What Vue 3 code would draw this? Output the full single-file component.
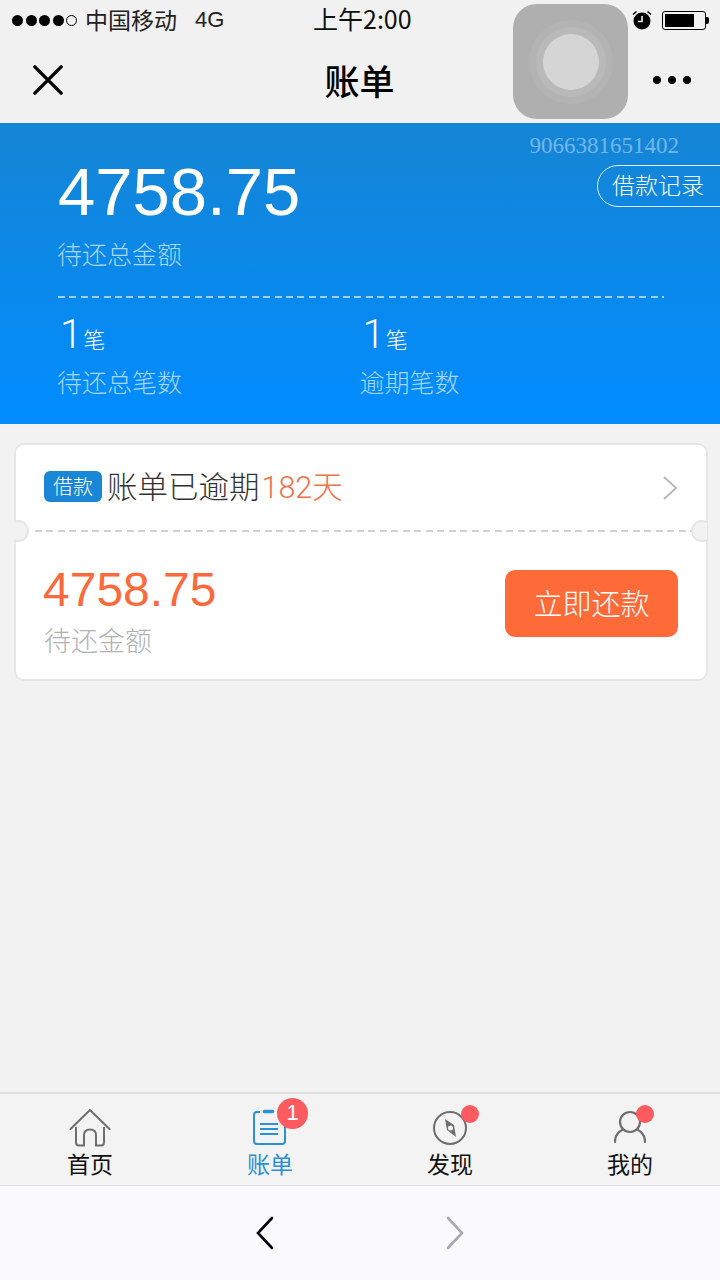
<script setup>
const tabs = [
  { key: 'home', label: '首页' },
  { key: 'bill', label: '账单', active: true, count: 1 },
  { key: 'find', label: '发现', dot: true },
  { key: 'me', label: '我的', dot: true }
]
</script>

<template>
  <div class="screen">
    <header class="top">
      <div class="status">
        <div class="status-left">
          <span class="signal"><i></i><i></i><i></i><i></i><i class="empty"></i></span>
          <span class="carrier">中国移动</span>
          <span class="net">4G</span>
        </div>
        <div class="clock">上午2:00</div>
        <div class="status-right">
          <svg class="alarm" width="22" height="22" viewBox="0 0 22 22">
            <circle cx="11" cy="12" r="8.500" fill="#000" />
            <path d="M11 7v5.500H7" fill="none" stroke="#f1f1f1" stroke-width="1.600" />
            <path d="M2 5.500 5.500 2.500M20 5.500 16.500 2.500" stroke="#000" stroke-width="1.600" />
          </svg>
          <span class="battery"><span class="level"></span></span>
          <span class="battery-cap"></span>
        </div>
      </div>
      <nav class="nav">
        <svg class="nav-close" width="32" height="32" viewBox="0 0 32 32">
          <path d="M2 2 30 30M30 2 2 30" stroke="#000" stroke-width="3.600" stroke-linecap="round" />
        </svg>
        <h1 class="nav-title">账单</h1>
        <div class="nav-more"><i></i><i></i><i></i></div>
      </nav>
    </header>

    <section class="hero">
      <div class="serial">9066381651402</div>
      <a class="record">借款记录</a>
      <div class="total">4758.75</div>
      <div class="hero-label total-label">待还总金额</div>
      <div class="hero-rule"></div>
      <div class="hero-stats">
        <div class="stat">
          <div class="stat-value">1<small>笔</small></div>
          <div class="hero-label">待还总笔数</div>
        </div>
        <div class="stat">
          <div class="stat-value">1<small>笔</small></div>
          <div class="hero-label">逾期笔数</div>
        </div>
      </div>
    </section>

    <main class="main">
      <article class="card">
        <div class="card-head">
          <span class="tag">借款</span>
          <span class="head-text">账单已逾期</span><span class="head-days">182天</span>
          <svg class="head-arrow" width="16" height="26" viewBox="0 0 16 26">
            <path d="M2 2 14 13 2 24" fill="none" stroke="#bbb" stroke-width="2" />
          </svg>
        </div>
        <div class="card-split"><span class="notch left"></span><span class="notch right"></span></div>
        <div class="card-body">
          <div>
            <div class="due">4758.75</div>
            <div class="due-label">待还金额</div>
          </div>
          <button class="pay">立即还款</button>
        </div>
      </article>
    </main>

    <footer class="tabbar">
      <div v-for="tab in tabs" :key="tab.key" class="tab" :class="[tab.key, { active: tab.active }]">
        <div class="tab-icon">
          <svg v-if="tab.key === 'home'" width="42" height="38" viewBox="0 0 42 38" fill="none" stroke="#6e6e6e" stroke-width="2">
            <path d="M1.500 20 21 1 40.500 20" stroke-linecap="round" />
            <path d="M7 18V33.500Q7 36.500 10 36.500H15V26Q15 20.500 21 20.500T27 26V36.500H32Q35 36.500 35 33.500V18" />
          </svg>
          <svg v-else-if="tab.key === 'bill'" width="36" height="38" viewBox="0 0 36 38" fill="none" stroke="#2a90d8" stroke-width="2">
            <path d="M8 3H5Q2 3 2 6V32Q2 35 5 35H30Q33 35 33 32V6Q33 3 30 3H25" />
            <path d="M12.500 2.500H20.500" stroke-width="3.500" stroke-linecap="round" />
            <path d="M8 15H26M8 20H26M8 25H26" />
          </svg>
          <svg v-else-if="tab.key === 'find'" width="36" height="36" viewBox="0 0 36 36" fill="none">
            <circle cx="18" cy="18" r="16" stroke="#6e6e6e" stroke-width="2" />
            <path d="M13 9 22 15 24 27 15 20Z" fill="#6e6e6e" />
            <circle cx="18.500" cy="18" r="2.500" fill="#f2f2f2" />
          </svg>
          <svg v-else width="34" height="36" viewBox="0 0 34 36" fill="none" stroke="#6e6e6e" stroke-width="2.200">
            <path d="M2 32C2 23 9 18 17 18S32 23 32 32" stroke-linecap="round" />
            <circle cx="17" cy="12" r="10" fill="#f3f3f3" />
          </svg>
          <span v-if="tab.count" class="count">{{ tab.count }}</span>
          <span v-if="tab.dot" class="dot"></span>
        </div>
        <div class="tab-label">{{ tab.label }}</div>
      </div>
    </footer>

    <div class="browser-bar">
      <svg width="20" height="34" viewBox="0 0 20 34">
        <path d="M17 2 3 17 17 32" fill="none" stroke="#000" stroke-width="2.600" stroke-linecap="round" />
      </svg>
      <svg width="20" height="34" viewBox="0 0 20 34">
        <path d="M3 2 17 17 3 32" fill="none" stroke="#aaa" stroke-width="2.600" stroke-linecap="round" />
      </svg>
    </div>

    <div class="assist">
      <span class="ring r1"><span class="ring r2"><span class="ring r3"></span></span></span>
    </div>
  </div>
</template>

<style scoped>
.screen {
  position: relative;
  display: flex;
  flex-direction: column;
  width: 720px;
  height: 1280px;
  overflow: hidden;
  background: #f2f2f2;
  font-family: "Noto Sans CJK SC", "Noto Sans", sans-serif;
  font-weight: 300;
  color: #000;
}
.top {
  background: #f1f1f1;
  height: 123px;
  flex: none;
}
.status {
  position: relative;
  display: flex;
  align-items: center;
  justify-content: space-between;
  height: 40px;
  padding: 0 11px 0 12px;
  font-size: 22px;
}
.status-left {
  display: flex;
  align-items: center;
}
.signal {
  display: flex;
  gap: 2.500px;
  margin-right: 8px;
}
.signal i {
  width: 11px;
  height: 11px;
  border-radius: 50%;
  background: #000;
}
.signal i.empty {
  background: none;
  border: 1px solid #000;
  box-sizing: border-box;
}
.carrier {
  margin-top: -3px;
  font-size: 23px;
  font-weight: 400;
  color: #222;
}
.net {
  margin-left: 18px;
  font-family: "Liberation Sans", sans-serif;
  font-size: 22px;
  font-weight: 400;
  color: #222;
}
.clock {
  position: absolute;
  left: 313px;
  top: -2px;
  line-height: 40px;
  font-size: 25px;
  font-weight: 400;
  color: #111;
}
.status-right {
  display: flex;
  align-items: center;
}
.alarm {
  margin-right: 9px;
}
.battery {
  display: block;
  box-sizing: border-box;
  width: 44px;
  height: 19px;
  padding: 2px;
  border: 1px solid #000;
  border-radius: 3px;
}
.level {
  display: block;
  width: 29px;
  height: 100%;
  background: #000;
}
.battery-cap {
  width: 3px;
  height: 7px;
  background: #000;
  border-radius: 0 2px 2px 0;
}
.nav {
  display: flex;
  align-items: center;
  justify-content: space-between;
  height: 83px;
  padding: 0 29px 0 33px;
}
.nav-close {
  width: 30px;
  height: 30px;
  margin-bottom: 3px;
}
.nav-title {
  margin: 0 0 4px 3px;
  font-size: 35px;
  font-weight: 500;
  color: #000;
}
.nav-more {
  display: flex;
  gap: 7px;
  margin-bottom: 3px;
}
.nav-more i {
  width: 8px;
  height: 8px;
  border-radius: 50%;
  background: #000;
}
.hero {
  position: relative;
  flex: none;
  box-sizing: border-box;
  height: 301px;
  padding: 30px 57px 0 58px;
  background: linear-gradient(180deg, #1585d4 0%, #008cff 100%);
  color: #fff;
}
.serial {
  position: absolute;
  top: 8px;
  right: 41px;
  font-family: "Liberation Serif", serif;
  font-size: 23px;
  line-height: 30px;
  font-weight: 400;
  color: rgba(255, 255, 255, 0.42);
}
.record {
  position: absolute;
  top: 42px;
  right: -2px;
  box-sizing: border-box;
  width: 125px;
  height: 42px;
  border: 1px solid #d8eefc;
  border-radius: 21px 0 0 21px;
  padding-left: 14px;
  font-size: 23px;
  line-height: 36px;
  font-weight: 300;
}
.total {
  font-family: "Liberation Sans", sans-serif;
  font-size: 67px;
  line-height: 78px;
  font-weight: 400;
}
.hero-label {
  margin-left: -1px;
  font-size: 25px;
  line-height: 36px;
  color: rgba(255, 255, 255, 0.66);
}
.total-label {
  margin-top: 4px;
}
.hero-rule {
  margin: 25px -1px 0 0;
  height: 2px;
  background: repeating-linear-gradient(90deg, rgba(255, 255, 255, 0.6) 0 7px, transparent 7px 11.400px);
}
.hero-stats {
  display: flex;
  margin-top: 14px;
}
.stat {
  width: 303px;
}
.stat-value {
  display: flex;
  align-items: baseline;
  padding-left: 2px;
  font-family: Roboto, "Liberation Sans", sans-serif;
  font-size: 40px;
  line-height: 46px;
  font-weight: 300;
}
.stat-value small {
  margin-left: 1px;
  font-family: "Noto Sans CJK SC", sans-serif;
  font-size: 22px;
  font-weight: 300;
}
.stat .hero-label {
  margin-top: 2px;
}
.main {
  flex: 1;
  padding: 19px 12px 0 14px;
  background: #f2f2f2;
}
.card {
  box-sizing: border-box;
  height: 238px;
  background: #fff;
  border: 2px solid #e6e6e6;
  border-radius: 10px;
}
.card-head {
  display: flex;
  align-items: center;
  height: 85px;
  padding: 0 28px 0 28px;
}
.tag {
  box-sizing: border-box;
  width: 58px;
  height: 31px;
  margin: 0 5px 3px 0;
  border-radius: 6px;
  background: #1a86d6;
  color: #fff;
  font-size: 20px;
  line-height: 29px;
  text-align: center;
}
.head-text {
  margin-bottom: 6px;
  font-size: 30.500px;
  color: #333;
}
.head-days {
  margin-bottom: 6px;
  margin-left: 2px;
  font-family: Roboto, "Noto Sans CJK SC", sans-serif;
  font-size: 30.500px;
  color: #f0714a;
}
.head-arrow {
  margin-left: auto;
}
.card-split {
  position: relative;
  margin: 0 14px 0 19px;
  height: 2px;
  background: repeating-linear-gradient(90deg, #d2d2d2 0 7px, transparent 7px 11.500px);
}
.notch {
  position: absolute;
  top: -10px;
  box-sizing: border-box;
  width: 22px;
  height: 22px;
  background: #f2f2f2;
  border: 2px solid #e6e6e6;
  border-radius: 50%;
}
.notch.left {
  left: -28px;
  clip-path: inset(-1px -1px -1px 7px);
}
.notch.right {
  right: -21px;
  clip-path: inset(-1px 6px -1px -1px);
}
.card-body {
  display: flex;
  align-items: flex-start;
  justify-content: space-between;
  padding: 30px 28px 0 27px;
}
.due {
  font-family: "Liberation Sans", sans-serif;
  font-size: 48px;
  line-height: 56px;
  font-weight: 400;
  color: #fb6a3c;
}
.due-label {
  margin-top: 3px;
  padding-left: 1px;
  font-size: 27px;
  line-height: 38px;
  color: #b2b2b2;
}
.pay {
  width: 173px;
  height: 67px;
  margin-top: 8px;
  padding: 0 0 4px;
  border: 0;
  border-radius: 10px;
  background: #ff6a39;
  color: #fff;
  font-family: inherit;
  font-size: 29px;
  font-weight: 300;
}
.tabbar {
  display: flex;
  flex: none;
  height: 91px;
  border-top: 2px solid #dedede;
  border-bottom: 1px solid #dedede;
  background: #f3f3f3;
}
.tab {
  flex: 1;
  display: flex;
  flex-direction: column;
  align-items: center;
  padding-top: 14px;
}
.tab-icon {
  position: relative;
  display: flex;
  align-items: center;
  justify-content: center;
  width: 44px;
  height: 40px;
}
.tab-label {
  margin-top: 1px;
  font-size: 23px;
  line-height: 28px;
  font-weight: 400;
  color: #111;
}
.tab.active .tab-label {
  color: #2a90d8;
}
.count {
  position: absolute;
  top: -10px;
  left: 29px;
  width: 31px;
  height: 31px;
  border-radius: 50%;
  background: #ff5a5f;
  color: #fff;
  font-family: "Liberation Sans", sans-serif;
  font-size: 22px;
  line-height: 30px;
  text-align: center;
}
.dot {
  position: absolute;
  top: -3px;
  width: 18px;
  height: 18px;
  border-radius: 50%;
  background: #ff5a5f;
}
.find .dot {
  left: 33px;
}
.me .dot {
  left: 28px;
}
.browser-bar {
  flex: none;
  display: flex;
  align-items: center;
  justify-content: center;
  gap: 170px;
  height: 94px;
  background: #fafafc;
}
.assist {
  position: absolute;
  left: 513px;
  top: 4px;
  display: flex;
  align-items: center;
  justify-content: center;
  width: 115px;
  height: 115px;
  border-radius: 24px;
  background: #afafaf;
}
.ring {
  display: flex;
  align-items: center;
  justify-content: center;
  border-radius: 50%;
}
.r1 {
  width: 84px;
  height: 84px;
  background: #b3b3b3;
}
.r2 {
  width: 70px;
  height: 70px;
  background: #b9b9b9;
}
.r3 {
  width: 56px;
  height: 56px;
  background: #d5d5d5;
}
</style>
